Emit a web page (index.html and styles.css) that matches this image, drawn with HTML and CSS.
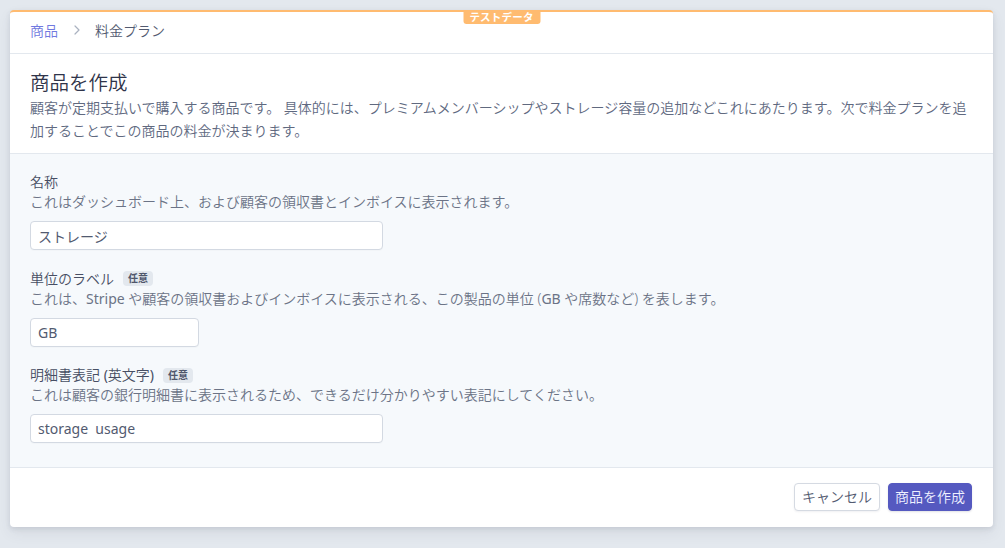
FILE: index.html
```html
<!DOCTYPE html>
<html lang="ja">
<head>
<meta charset="utf-8">
<title>商品を作成</title>
<link rel="stylesheet" href="styles.css">
</head>
<body>
<div class="card">
  <div class="test-badge">テストデータ</div>
  <nav class="breadcrumb">
    <a class="crumb-link" href="#">商品</a>
    <svg class="chevron" width="6" height="10" viewBox="0 0 6 10"><path d="M1 1l4 4-4 4" fill="none" stroke="#aab2c0" stroke-width="1.2" stroke-linecap="round" stroke-linejoin="round"/></svg>
    <span class="crumb-current">料金プラン</span>
  </nav>
  <header class="head">
    <h1 class="title">商品を作成</h1>
    <p class="lead">顧客が定期支払いで購入する商品です。 具体的には、プレミアムメンバーシップやストレージ容量の追加などこれにあたります。次で料金プランを追加することでこの商品の料金が決まります。</p>
  </header>
  <section class="form">
    <div class="field">
      <div class="label">名称</div>
      <div class="help">これはダッシュボード上、および顧客の領収書とインボイスに表示されます。</div>
      <input class="input input-wide" type="text" value="ストレージ">
    </div>
    <div class="field">
      <div class="label">単位のラベル<span class="optional">任意</span></div>
      <div class="help">これは、<span class="latin">Stripe</span> や顧客の領収書およびインボイスに表示される、この製品の単位 (<span class="latin">GB</span> や席数など) を表します。</div>
      <input class="input input-narrow" type="text" value="GB">
    </div>
    <div class="field">
      <div class="label">明細書表記 <span class="latin">(</span>英文字<span class="latin">)</span><span class="optional">任意</span></div>
      <div class="help">これは顧客の銀行明細書に表示されるため、できるだけ分かりやすい表記にしてください。</div>
      <input class="input input-wide" type="text" value="storage  usage">
    </div>
  </section>
  <footer class="actions">
    <button class="btn btn-secondary" type="button">キャンセル</button>
    <button class="btn btn-primary" type="button">商品を作成</button>
  </footer>
</div>
</body>
</html>
```
FILE: styles.css
```css
* { box-sizing: border-box; }
html, body { height: 100%; }
body {
  margin: 0;
  padding: 10px 12px 0 10px;
  background: #e3e8ee;
  font-family: "Noto Sans", "Noto Sans CJK JP", sans-serif;
  font-size: 14px;
  font-weight: 350;
  color: #474e63;
}
.latin { font-weight: 400; }
.card {
  position: relative;
  width: 983px;
  background: #ffffff;
  border-top: 2px solid #ffbb70;
  border-radius: 4px;
  box-shadow: 0 2px 5px rgba(60, 66, 87, 0.12), 0 6px 14px rgba(60, 66, 87, 0.08);
}
.test-badge {
  position: absolute;
  top: -2px;
  left: 50%;
  transform: translateX(-50%);
  width: 77px;
  height: 14px;
  background: #ffbb70;
  color: #ffffff;
  font-size: 10.5px;
  font-weight: 700;
  line-height: 14px;
  text-align: center;
  border-radius: 0 0 3px 3px;
  letter-spacing: 0.2px;
}
.breadcrumb {
  display: flex;
  align-items: center;
  height: 42px;
  padding: 0 20px 5px;
  border-bottom: 1px solid #e3e8ee;
}
.crumb-link {
  color: #7079e0;
  text-decoration: none;
}
.chevron { margin: 0 15px 0 16px; }
.crumb-current { color: #525a70; }
.head {
  padding: 16px 20px 11px;
  border-bottom: 1px solid #e3e8ee;
}
.title {
  margin: 0;
  font-size: 19.5px;
  font-weight: 350;
  line-height: 26px;
  color: #2f344a;
}
.lead {
  margin: 0;
  line-height: 23px;
  color: #60697f;
}
.form {
  background: #f6f9fc;
  padding: 18px 20px 24px;
  border-bottom: 1px solid #e3e8ee;
  display: flex;
  flex-direction: column;
  gap: 18.5px;
}
.field {
  display: flex;
  flex-direction: column;
  align-items: flex-start;
}
.label {
  line-height: 20px;
  color: #474e63;
  display: flex;
  align-items: center;
  white-space: pre;
}
.optional {
  display: inline-block;
  margin-left: 9px;
  padding: 0 5px;
  height: 15px;
  line-height: 15px;
  font-size: 10px;
  font-weight: 700;
  color: #4f566b;
  background: #e3e8ee;
  border-radius: 4px;
}
.help {
  line-height: 20px;
  color: #6b7386;
  margin-bottom: 9px;
}
.input {
  height: 29px;
  padding: 0 7px;
  border: 1px solid #d3d9e2;
  border-radius: 4px;
  background: #ffffff;
  font-family: "Noto Sans", "Noto Sans CJK JP", sans-serif;
  font-size: 14px;
  font-weight: 400;
  color: #525a70;
  box-shadow: 0 1px 1px rgba(0, 0, 0, 0.02);
  outline: none;
}
.input-wide { width: 353px; }
.input-narrow { width: 169px; }
.actions {
  display: flex;
  justify-content: flex-end;
  gap: 8px;
  padding: 15px 21px 16px;
}
.btn {
  height: 28px;
  padding: 0 7px;
  border-radius: 4px;
  font-family: "Noto Sans", "Noto Sans CJK JP", sans-serif;
  font-size: 14px;
  font-weight: 350;
  line-height: 26px;
  cursor: pointer;
}
.btn-secondary {
  margin-left: 1px;
  background: #ffffff;
  color: #525a70;
  border: 1px solid #d5dae2;
  box-shadow: 0 1px 2px rgba(60, 66, 87, 0.08);
}
.btn-primary {
  padding: 0 6px;
  background: #5559c0;
  color: #eef0ff;
  border: 1px solid #5559c0;
  box-shadow: 0 1px 2px rgba(60, 66, 87, 0.15);
}
```
